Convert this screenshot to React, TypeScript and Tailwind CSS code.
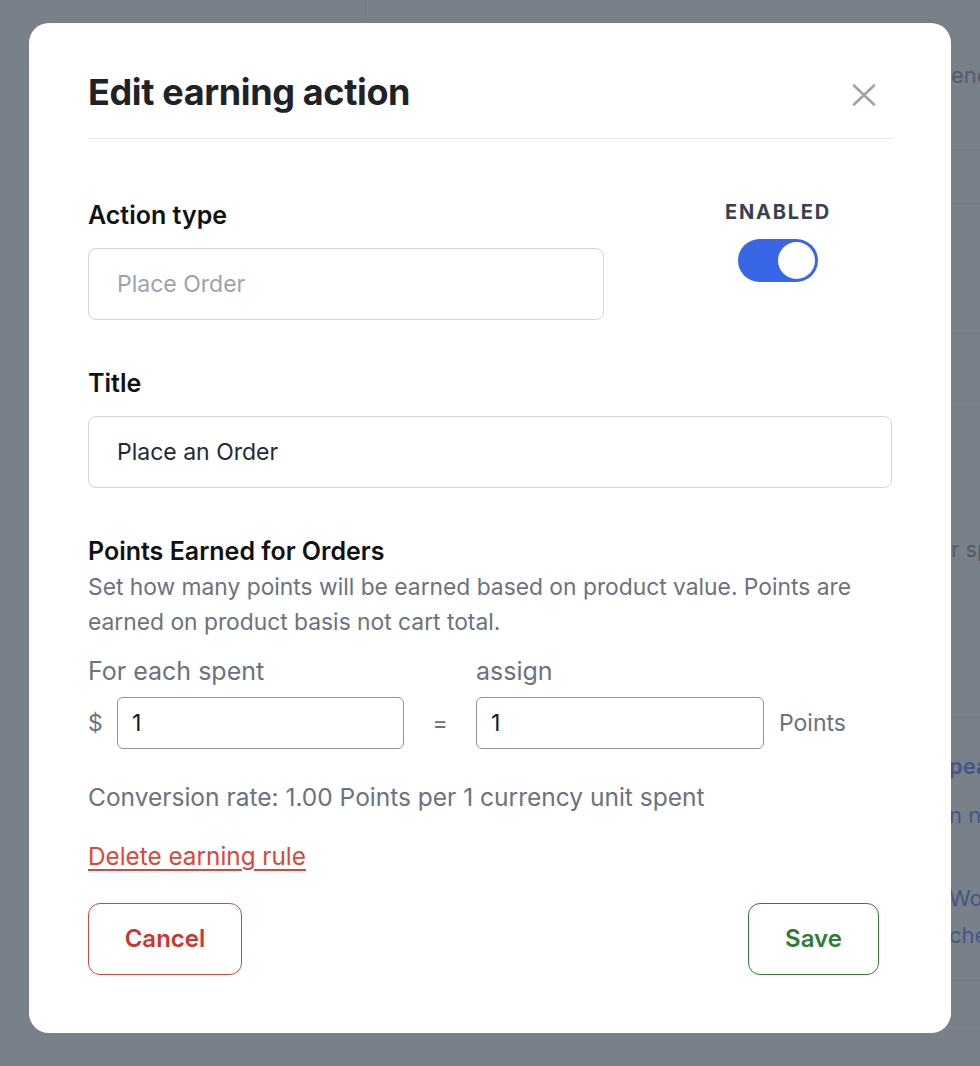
import { useState } from 'react';

function BackgroundPage() {
  return (
    <div className="flex h-full text-[22px] whitespace-nowrap">
      <div className="w-[366px] shrink-0">
        <div className="h-[60px] border-r border-[#e5e7eb]" />
      </div>
      <div className="flex flex-1 flex-col">
        <div className="h-[151px] shrink-0 border-b border-[#e5e7eb] pl-[585px] pt-[60px] leading-[30px] text-[#6b7280]">
          encourage repeat visits
        </div>
        <div className="h-[53px] shrink-0 border-b border-[#e5e7eb]" />
        <div className="h-[130px] shrink-0 border-b border-[#e5e7eb]" />
        <div className="h-[74px] shrink-0 border-b border-[#e5e7eb]" />
        <div className="h-[310px] shrink-0 border-b border-[#e5e7eb] pl-[585px] pt-[126px] leading-[30px] text-[#6b7280]">
          r spend
        </div>
        <div className="h-[263px] shrink-0 border-b border-[#e5e7eb] pl-[583px] pt-[33px] leading-[30px] text-[#3a57e8]">
          <div className="font-semibold">peak</div>
          <div className="mt-[19px]">n now</div>
          <div className="mt-[53px]">Wooc</div>
          <div className="mt-[7px]">check</div>
        </div>
        <div className="h-[44px] shrink-0 border-b border-[#e5e7eb]" />
        <div className="flex-1" />
      </div>
    </div>
  );
}

function Toggle({ on, onChange }: { on: boolean; onChange: (v: boolean) => void }) {
  return (
    <button
      type="button"
      onClick={() => onChange(!on)}
      className={`flex h-[43px] w-[80px] items-center rounded-full p-[3px] ${on ? 'justify-end bg-[#3866e4]' : 'justify-start bg-[#d1d5db]'}`}
    >
      <span className="block h-[37px] w-[37px] rounded-full bg-white" />
    </button>
  );
}

function EditModal() {
  const [enabled, setEnabled] = useState(true);
  const [title, setTitle] = useState('Place an Order');
  const [spent, setSpent] = useState('1');
  const [points, setPoints] = useState('1');

  return (
    <div className="w-[922px] rounded-[20px] bg-white pl-[59px] pr-[59px] pt-[49px] pb-[58px]">
      <div className="flex items-start justify-between border-b border-[#e5e7eb] pb-[26px]">
        <h2 className="text-[36px] leading-[40px] font-bold tracking-[-0.01em] text-[#1f2328]">
          Edit earning action
        </h2>
        <button type="button" className="mt-[12px] mr-[16px] text-[#9ca3af]">
          <svg width="24" height="22" viewBox="0 0 24 22" fill="none" stroke="currentColor" strokeWidth="2.6" strokeLinecap="round">
            <path d="M2 1.5 22 20.5M22 1.5 2 20.5" />
          </svg>
        </button>
      </div>

      <div className="mt-[62px] flex items-start">
        <div className="w-[516px]">
          <label className="block text-[25px] leading-[28px] font-semibold text-[#111]">Action type</label>
          <div className="mt-[19px] flex h-[72px] items-center rounded-[8px] border border-[#d4d6da] px-[28px] text-[23px] text-[#9ca3af] shadow-[inset_0_1px_2px_rgba(0,0,0,0.04)]">
            Place Order
          </div>
        </div>
        <div className="ml-[122px] flex w-[104px] flex-col items-center">
          <span className="-mt-[1px] text-[20px] leading-[24px] font-bold tracking-[0.09em] text-[#374151]">ENABLED</span>
          <div className="mt-[15px]">
            <Toggle on={enabled} onChange={setEnabled} />
          </div>
        </div>
      </div>

      <label className="mt-[49px] block text-[25px] leading-[28px] font-semibold text-[#111]">Title</label>
      <input
        value={title}
        onChange={(e) => setTitle(e.target.value)}
        className="mt-[19px] h-[72px] w-full rounded-[8px] border border-[#d4d6da] px-[28px] text-[23px] text-[#1f2937] outline-none"
      />

      <h3 className="mt-[49px] text-[25px] leading-[28px] font-semibold text-[#111]">Points Earned for Orders</h3>
      <p className="mt-[4px] text-[22.8px] leading-[35px] text-[#6b7280]">
        Set how many points will be earned based on product value. Points are earned on product basis not cart total.
      </p>

      <div className="mt-[18px] grid grid-cols-[29px_287px_72px_288px_auto] items-center gap-y-[12px] text-[23px] text-[#6b7280]">
        <span className="col-span-2 text-[25px] leading-[28px]">For each spent</span>
        <span />
        <span className="text-[25px] leading-[28px]">assign</span>
        <span />
        <span>$</span>
        <input
          value={spent}
          onChange={(e) => setSpent(e.target.value)}
          className="h-[52px] rounded-[6px] border border-[#8f939b] px-[14px] text-[23px] text-[#111827] outline-none"
        />
        <span className="text-center">=</span>
        <input
          value={points}
          onChange={(e) => setPoints(e.target.value)}
          className="h-[52px] rounded-[6px] border border-[#8f939b] px-[14px] text-[23px] text-[#111827] outline-none"
        />
        <span className="pl-[15px]">Points</span>
      </div>

      <p className="mt-[34px] text-[24.5px] leading-[28px] text-[#6b7280]">
        Conversion rate: 1.00 Points per 1 currency unit spent
      </p>

      <a className="mt-[31px] inline-block text-[24.3px] leading-[28px] text-[#e0443a] underline underline-offset-[4px]" href="#">
        Delete earning rule
      </a>

      <div className="mt-[32px] flex items-center justify-between">
        <button type="button" className="h-[72px] w-[154px] rounded-[12px] border border-[#d9413a] text-[24px] font-semibold text-[#d0342c]">
          Cancel
        </button>
        <button type="button" className="mr-[13px] h-[72px] w-[131px] rounded-[12px] border border-[#2e7d32] text-[24px] font-semibold text-[#2e7d32]">
          Save
        </button>
      </div>
    </div>
  );
}

export default function App() {
  return (
    <div className="relative h-[1066px] w-full overflow-hidden bg-white [font-family:Inter,sans-serif]">
      <BackgroundPage />
      <div className="absolute inset-0 flex items-start justify-center bg-[#4b5563]/75 pt-[23px]">
        <EditModal />
      </div>
    </div>
  );
}
